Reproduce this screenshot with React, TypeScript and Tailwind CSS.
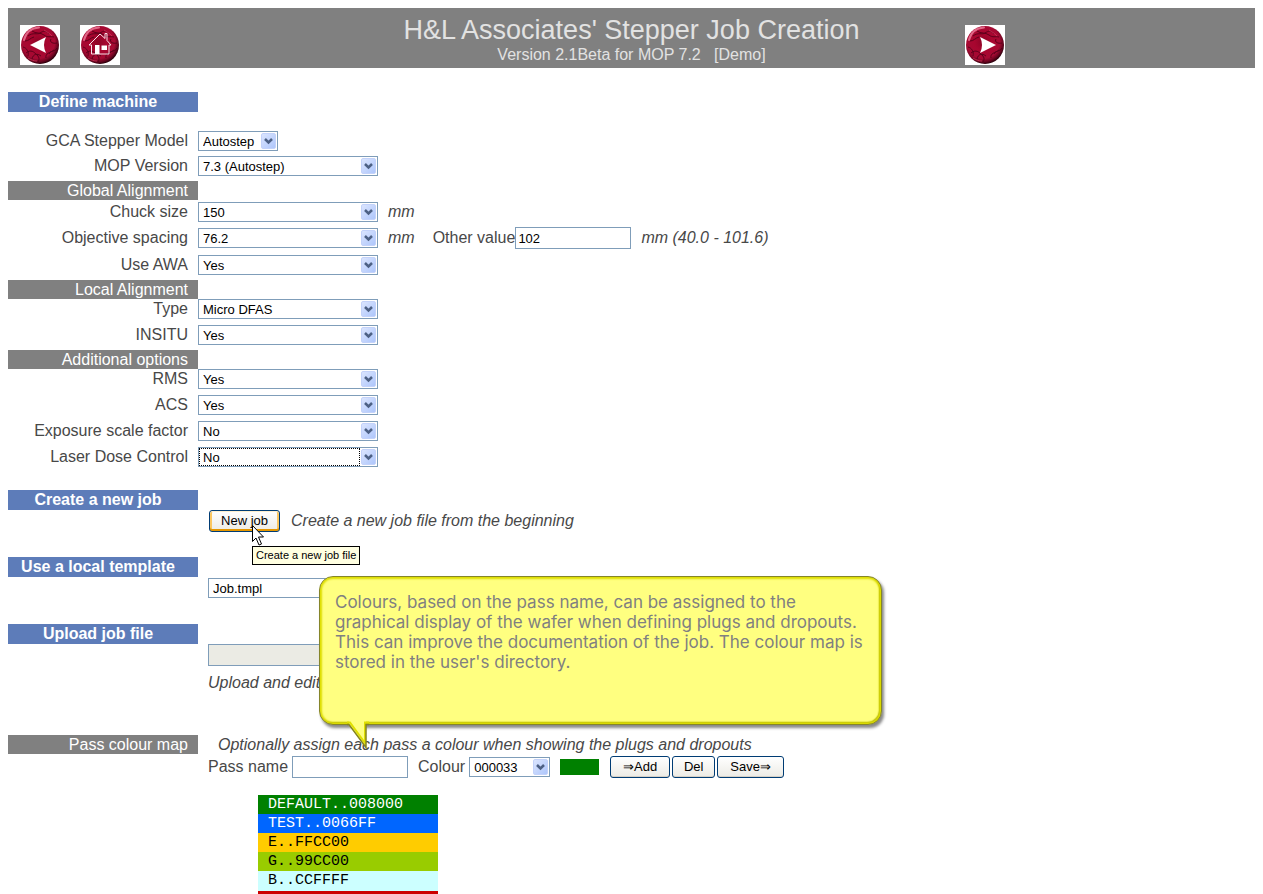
import { useState, type ReactNode } from "react";

const font = "font-['Liberation_Sans',Arial,sans-serif]";

function Orb({ label, id, children }: { label: string; id: string; children: ReactNode }) {
  return (
    <a href="#" aria-label={label} className="block size-10 bg-white">
      <svg viewBox="0 0 40 40" className="size-10">
        <defs>
          <radialGradient id={id} cx="0.45" cy="0.42" r="0.58">
            <stop offset="0" stopColor="#8c0426" />
            <stop offset="0.4" stopColor="#a8062f" />
            <stop offset="0.75" stopColor="#a60a33" />
            <stop offset="0.9" stopColor="#6c0420" />
            <stop offset="1" stopColor="#2e000c" />
          </radialGradient>
        </defs>
        <circle cx="20" cy="20" r="19" fill={`url(#${id})`} />
        <path d="M4 15C6 7 12 3 19 2.500" fill="none" stroke="#ef7f9c" strokeWidth="2" strokeLinecap="round" opacity="0.8" />
        <g fill="none" stroke="#4a0016" strokeWidth="1" opacity="0.8">
          <path d="M8 11c5-4 9-1 12-3s6-3 9 1M12 6c4 3 8 1 12 4s6 1 10 2" />
          <path d="M3 22c4 1 6 5 5 9M6 28c5-4 8-1 11 2s2 5 1 7M12 34c1-5 5-6 9-3" />
          <path d="M26 33c-1-5 4-5 8-8M29 29c2-4 6-2 8-6M31 14c-2 3 2 5 6 4M5 16c4 0 5-3 9-4" />
        </g>
        <path d="M24 5c3 2 5 3 8 6M8 33c3 2 6 3 9 3" fill="none" stroke="#d63a5e" strokeWidth="1" opacity="0.7" />
        {children}
      </svg>
    </a>
  );
}

function Chevron() {
  return (
    <span className="pointer-events-none absolute top-[2px] right-[2px] bottom-[2px] flex w-[15px] items-center justify-center rounded-[2px] border border-[#c3d2fa] bg-gradient-to-br from-[#dbe5fe] to-[#aec6fb]">
      <svg viewBox="0 0 9 7" className="h-[7px] w-[9px]">
        <path d="M1 1L4.500 4.500L8 1" fill="none" stroke="#4d6185" strokeWidth="2.500" />
      </svg>
    </span>
  );
}

type SelectProps = { id: string; value: string; width?: string; label?: string; focused?: boolean };

function Select({ id, value, width = "w-[180px]", label, focused }: SelectProps) {
  return (
    <span className={`relative block h-5 shrink-0 ${width}`}>
      <select
        id={id}
        aria-label={label}
        className="block h-5 w-full appearance-none border border-[#7f9db9] bg-white pt-px pl-1 text-[13px] leading-[17px] text-black outline-none"
      >
        <option>{value}</option>
      </select>
      {focused && (
        <span className="pointer-events-none absolute top-px right-[18px] bottom-px left-px border border-dotted border-black" />
      )}
      <Chevron />
    </span>
  );
}

function Row({ id, label, tall, children }: { id: string; label: string; tall?: boolean; children: ReactNode }) {
  return (
    <div className={`flex items-center ${tall ? "h-[22px]" : "h-5"}`}>
      <label htmlFor={id} className="w-[190px] shrink-0 pr-[10px] text-right">
        {label}
      </label>
      {children}
    </div>
  );
}

function GreyBar({ children }: { children: ReactNode }) {
  return (
    <h3 className="h-[19px] w-[190px] shrink-0 bg-[#808080] pr-[10px] text-right leading-5 text-white">{children}</h3>
  );
}

function BlueBar({ children }: { children: ReactNode }) {
  return (
    <h2 className="h-5 w-[190px] bg-[#5d7cb9] pr-[10px] text-center leading-5 font-bold text-white">{children}</h2>
  );
}

function XpButton({ children, width, hot }: { children: ReactNode; width: string; hot?: boolean }) {
  return (
    <button
      type="button"
      className={`h-[22px] shrink-0 rounded-[3px] border border-[#003c74] bg-gradient-to-b from-white to-[#ecebe5] text-[13px] leading-5 text-black ${width} ${
        hot
          ? "shadow-[inset_0_-2px_0_#e59700,inset_0_1px_0_#fff0cf,inset_2px_0_0_#fbc761,inset_-2px_0_0_#fbc761]"
          : "shadow-[inset_0_-1px_0_#d6d0c5]"
      }`}
    >
      {children}
    </button>
  );
}

const passes = [
  { text: "DEFAULT..008000", style: "h-[19px] bg-[#008000] text-white" },
  { text: "TEST..0066FF", style: "h-[19px] bg-[#0066ff] text-white" },
  { text: "E..FFCC00", style: "h-[19px] bg-[#ffcc00] text-black" },
  { text: "G..99CC00", style: "h-[19px] bg-[#99cc00] text-black" },
  { text: "B..CCFFFF", style: "h-5 bg-[#ccffff] text-black" },
];

function Callout() {
  return (
    <div className="absolute top-[576px] left-[319px] h-[149px] w-[563px] rounded-[14px] border border-[#85852a] bg-[#ffff80] px-[15px] py-[15px] text-[17px] leading-5 text-[#808080] shadow-[inset_0_0_2px_2px_#dede00,inset_-1px_-1px_1px_1px_#9c9c10,2px_3px_3px_#888]">
      <p className="font-['Inter','Liberation_Sans',sans-serif] whitespace-nowrap">
        Colours, based on the pass name, can be assigned to the
        <br />
        graphical display of the wafer when defining plugs and dropouts.
        <br />
        This can improve the documentation of the job. The colour map is
        <br />
        stored in the user's directory.
      </p>
      <svg viewBox="0 0 22 30" className="absolute top-[143px] left-[27px] h-[30px] w-[22px]">
        <path d="M2 0H19V28L2 5Z" fill="#ffff80" />
        <path d="M0 2.500H3L18 23V2.500H22" fill="none" stroke="#e0e000" strokeWidth="2" />
        <path d="M0 4.500H2L19 27.500V4.500H22" fill="none" stroke="#85851c" strokeWidth="1.500" />
      </svg>
    </div>
  );
}

export default function App() {
  const [other, setOther] = useState("102");
  const [pass, setPass] = useState("");

  return (
    <div className={`relative bg-white px-2 pt-2 text-[16px] leading-5 text-[#484848] ${font}`}>
      <header className="grid h-[60px] grid-cols-[1fr_2fr_1fr] bg-[#808080] text-[#e2e2e2]">
        <nav className="flex items-end gap-5 pb-[3px] pl-3">
          <Orb label="Back" id="orb-back">
            <path d="M10 20L26 12Q22 20 26 28Z" fill="#fff" />
          </Orb>
          <Orb label="Home" id="orb-home">
            <path
              d="M9 20L20 9L25 13.500V8.500H27V15.500L31 20H29V29H11.500V20Z"
              fill="none"
              stroke="#f6dfe5"
              strokeWidth="1"
            />
            <path d="M15 20h4.500v9H15zM21.500 20.500h5.500v4.500h-5.500z" fill="#fff" />
          </Orb>
        </nav>
        <div className="flex flex-col items-center pt-[7px] whitespace-nowrap">
          <h1 className="text-[27px] leading-[31px]">H&amp;L Associates' Stepper Job Creation</h1>
          <p className="leading-[18px]">Version 2.1Beta for MOP 7.2 &nbsp; [Demo]</p>
        </div>
        <nav className="flex items-end pb-[3px] pl-[22px]">
          <Orb label="Next" id="orb-next">
            <path d="M31 20L15 12Q19 20 15 28Z" fill="#fff" />
          </Orb>
        </nav>
      </header>

      <section className="mt-6">
        <BlueBar>Define machine</BlueBar>
        <div className="mt-[19px] flex flex-col gap-[5px]">
          <Row id="model" label="GCA Stepper Model">
            <Select id="model" value="Autostep" width="w-20" />
          </Row>
          <Row id="mop" label="MOP Version">
            <Select id="mop" value="7.3 (Autostep)" />
          </Row>
          <GreyBar>Global Alignment</GreyBar>
        </div>
        <div className="mt-[2px] mb-1 flex flex-col gap-[5px]">
          <Row id="chuck" label="Chuck size">
            <Select id="chuck" value="150" />
            <span className="ml-[10px] italic">mm</span>
          </Row>
          <Row id="spacing" label="Objective spacing" tall>
            <Select id="spacing" value="76.2" />
            <span className="ml-[10px] italic">mm</span>
            <label htmlFor="other" className="ml-[18px]">
              Other value
            </label>
            <input
              id="other"
              value={other}
              onChange={(e) => setOther(e.target.value)}
              className="h-[22px] w-[116px] border border-[#7f9db9] bg-white px-[2px] text-[13px] text-black outline-none"
            />
            <span className="ml-[10px] italic">mm (40.0 - 101.6)</span>
          </Row>
          <Row id="awa" label="Use AWA" tall>
            <Select id="awa" value="Yes" />
          </Row>
        </div>
        <GreyBar>Local Alignment</GreyBar>
        <div className="mb-[5px] flex flex-col gap-[6px]">
          <Row id="type" label="Type">
            <Select id="type" value="Micro DFAS" />
          </Row>
          <Row id="insitu" label="INSITU">
            <Select id="insitu" value="Yes" />
          </Row>
        </div>
        <GreyBar>Additional options</GreyBar>
        <div className="flex flex-col gap-[6px]">
          <Row id="rms" label="RMS">
            <Select id="rms" value="Yes" />
          </Row>
          <Row id="acs" label="ACS">
            <Select id="acs" value="Yes" />
          </Row>
          <Row id="exposure" label="Exposure scale factor">
            <Select id="exposure" value="No" />
          </Row>
          <Row id="laser" label="Laser Dose Control">
            <Select id="laser" value="No" focused />
          </Row>
        </div>
      </section>

      <section className="mt-[23px]">
        <BlueBar>Create a new job</BlueBar>
        <div className="ml-[201px] flex items-center gap-[11px]">
          <XpButton width="w-[71px]" hot>
            New job
          </XpButton>
          <span className="italic">Create a new job file from the beginning</span>
        </div>
      </section>

      <section className="mt-[25px]">
        <BlueBar>Use a local template</BlueBar>
        <div className="mt-px ml-[200px]">
          <Select id="template" label="Template" value="Job.tmpl" width="w-[220px]" />
        </div>
      </section>

      <section className="mt-[26px]">
        <BlueBar>Upload job file</BlueBar>
        <div className="ml-[200px]">
          <input
            aria-label="Job file"
            disabled
            className="block h-[22px] w-[220px] border border-[#7f9db9] bg-[#ebebe4] px-[2px] text-[13px]"
          />
          <p className="mt-[7px] italic">Upload and edit</p>
        </div>
      </section>

      <section className="mt-[42px]">
        <div className="flex items-start gap-5">
          <GreyBar>Pass colour map</GreyBar>
          <p className="italic">Optionally assign each pass a colour when showing the plugs and dropouts</p>
        </div>
        <div className="mt-px ml-[200px] flex items-center">
          <label htmlFor="pass">Pass name</label>
          <input
            id="pass"
            value={pass}
            onChange={(e) => setPass(e.target.value)}
            className="mr-[10px] ml-1 h-[22px] w-[116px] border border-[#7f9db9] bg-white px-[2px] text-[13px] text-black outline-none"
          />
          <label htmlFor="colour" className="mr-1">
            Colour
          </label>
          <Select id="colour" value="000033" width="w-[81px]" />
          <span className="mr-[11px] ml-[10px] h-4 w-[39px] bg-[#008000]" />
          <div className="flex gap-[2px]">
            <XpButton width="w-[60px]">⇒Add</XpButton>
            <XpButton width="w-[43px]">Del</XpButton>
            <XpButton width="w-[67px]">Save⇒</XpButton>
          </div>
        </div>
        <ul className="mt-[17px] ml-[250px] w-[180px] font-['Liberation_Mono',monospace] text-[15px] leading-[19px]">
          {passes.map((p) => (
            <li key={p.text} className={`pl-[10px] ${p.style}`}>
              {p.text}
            </li>
          ))}
          <li className="h-[3px] bg-[#cc0000]" />
        </ul>
      </section>

      <div
        role="tooltip"
        className="absolute top-[546px] left-[252px] h-[19px] border border-black bg-[#ffffe1] px-[3px] text-[11px] leading-[17px] whitespace-nowrap text-black"
      >
        Create a new job file
      </div>
      <svg viewBox="0 0 12 21" className="pointer-events-none absolute top-[525px] left-[252px] h-[21px] w-[12px]">
        <path d="M0.500 0.500V16.500L4 13L7 20L9.500 19L6.500 12H11.500Z" fill="#fff" stroke="#000" strokeWidth="1" />
      </svg>
      <Callout />
    </div>
  );
}
